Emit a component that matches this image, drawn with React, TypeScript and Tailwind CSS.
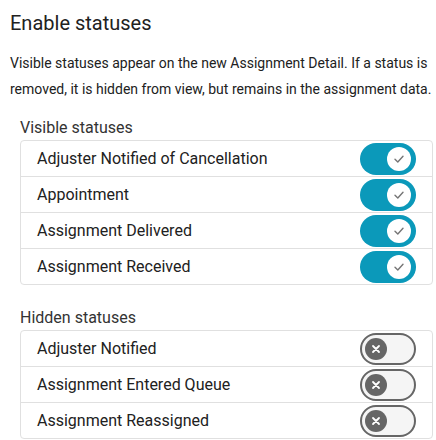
const visible = [
  "Adjuster Notified of Cancellation",
  "Appointment",
  "Assignment Delivered",
  "Assignment Received",
];

const hidden = ["Adjuster Notified", "Assignment Entered Queue", "Assignment Reassigned"];

function Toggle({ on }: { on: boolean }) {
  if (on) {
    return (
      <div className="flex h-[32px] w-[56px] shrink-0 items-center justify-end rounded-full bg-[#0b99ba] pr-[5px]">
        <div className="flex h-[24px] w-[24px] items-center justify-center rounded-full bg-white">
          <svg width="12" height="12" viewBox="0 0 12 12" fill="none">
            <path d="M2 6.3 L4.8 9 L10 3.2" stroke="#757575" strokeWidth="1.4" strokeLinecap="round" strokeLinejoin="round" />
          </svg>
        </div>
      </div>
    );
  }
  return (
    <div className="flex h-[32px] w-[56px] shrink-0 items-center rounded-full border-2 border-[#666666] bg-[#f5f5f5] pl-[3px]">
      <div className="flex h-[22px] w-[22px] items-center justify-center rounded-full bg-[#666666]">
        <svg width="10" height="10" viewBox="0 0 10 10" fill="none">
          <path d="M2 2 L8 8 M8 2 L2 8" stroke="#ffffff" strokeWidth="1.8" strokeLinecap="round" />
        </svg>
      </div>
    </div>
  );
}

function StatusList({ title, items, on }: { title: string; items: string[]; on: boolean }) {
  return (
    <div className="pl-[10px]">
      <div className="text-[16px] leading-[24px] text-[#333333]">{title}</div>
      <div className="rounded-[4px] border border-[#e0e0e0]">
        {items.map((item, i) => (
          <div
            key={item}
            className={`flex items-center justify-between pl-[16px] pr-[16px] ${
              i < items.length - 1 ? "h-[36px] border-b border-[#e0e0e0]" : "h-[35px]"
            }`}
          >
            <span className="text-[16px] text-[#212121]">{item}</span>
            <Toggle on={on} />
          </div>
        ))}
      </div>
    </div>
  );
}

export default function App() {
  return (
    <div className="min-h-[440px] bg-white pl-[10px] pr-[3px] pt-[9px] font-['Roboto',sans-serif]">
      <h1 className="text-[20px] leading-[28px] font-normal text-[#212121]">Enable statuses</h1>
      <p className="mt-[13px] text-[14px] leading-[26px] text-[#212121]">
        Visible statuses appear on the new Assignment Detail. If a status is removed, it is hidden from view, but
        remains in the assignment data.
      </p>
      <div className="mt-[14px]">
        <StatusList title="Visible statuses" items={visible} on />
      </div>
      <div className="mt-[21px]">
        <StatusList title="Hidden statuses" items={hidden} on={false} />
      </div>
    </div>
  );
}
